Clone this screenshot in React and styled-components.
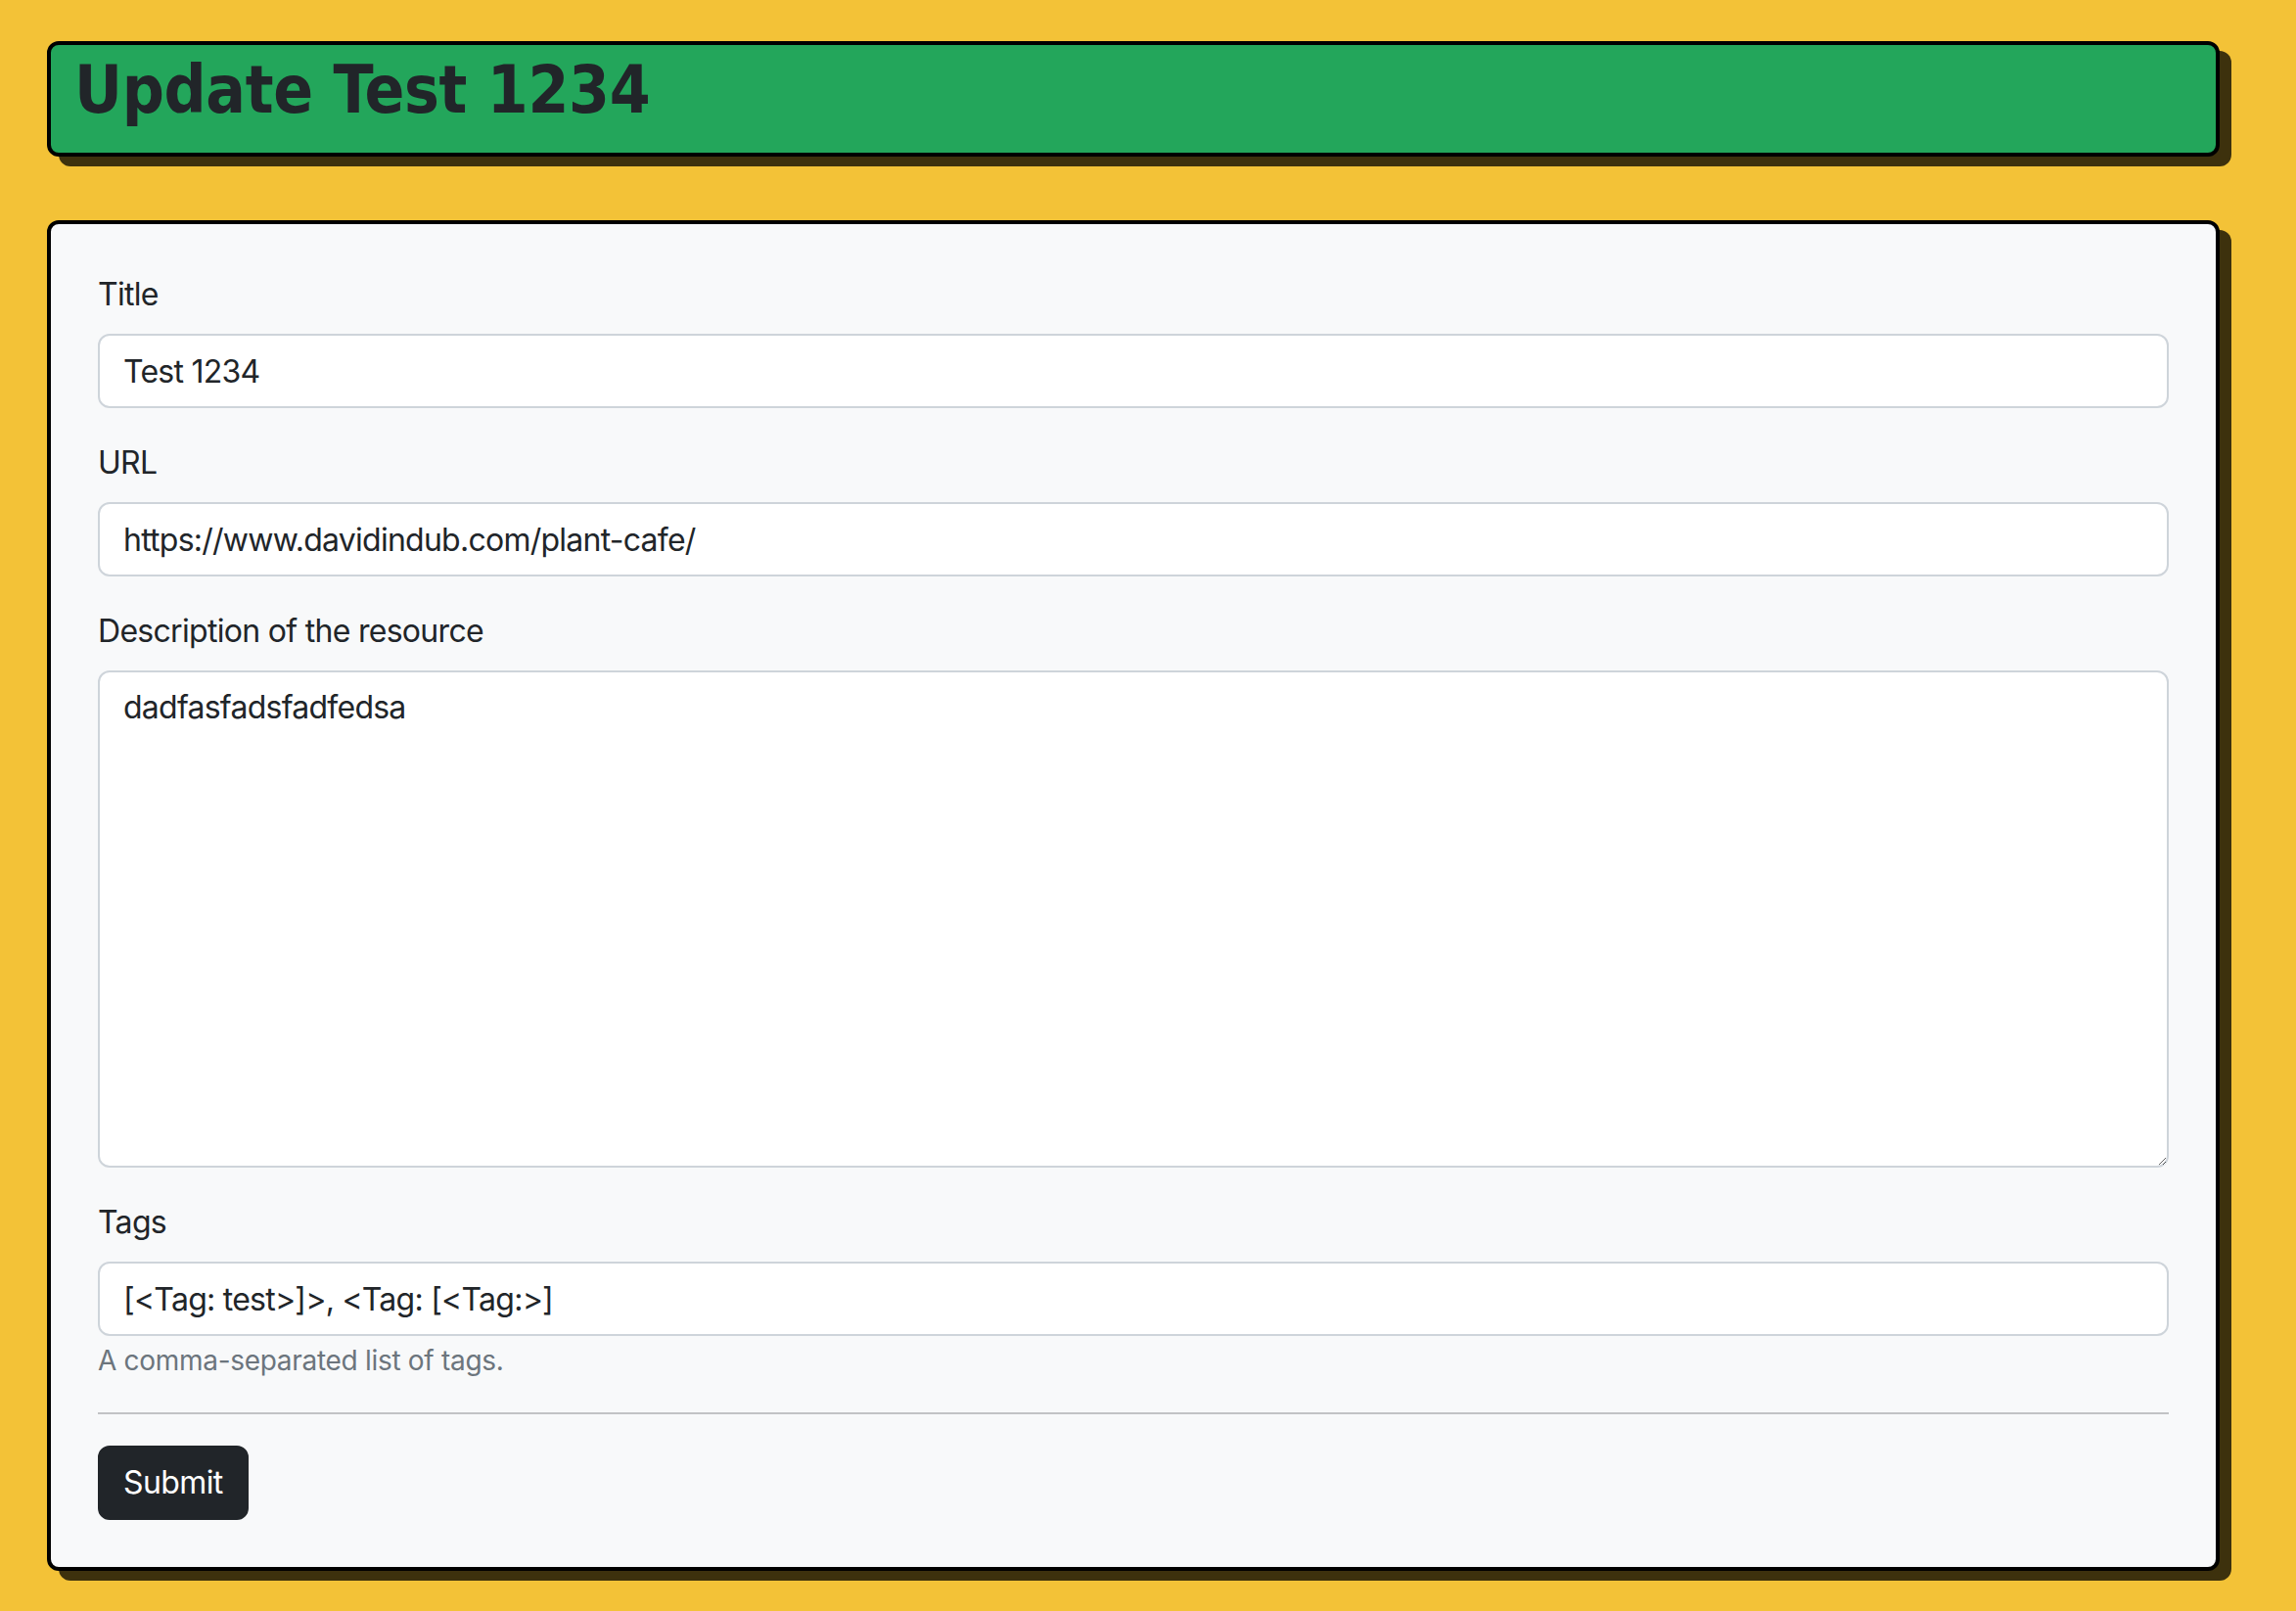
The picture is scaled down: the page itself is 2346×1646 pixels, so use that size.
import React from 'react';
import styled, { createGlobalStyle } from 'styled-components';

const GlobalStyle = createGlobalStyle`
  html, body {
    margin: 0;
    background: #f3c237;
  }
  body {
    font-family: Inter, "Liberation Sans", sans-serif;
    color: #212529;
  }
  * {
    box-sizing: border-box;
  }
`;

const Page = styled.div`
  display: flex;
  flex-direction: column;
  gap: 65px;
  padding: 42px 78px 40px 48px;
`;

const Panel = styled.div`
  background: ${props => props.bg || '#f8f9fa'};
  border: 4px solid #000;
  border-radius: 12px;
  box-shadow: 12px 10px 0 rgba(0, 0, 0, 0.75);
`;

const Heading = styled.h1`
  margin: 0;
  padding: 0 24px 18px;
  font-family: "DejaVu Sans Condensed", "DejaVu Sans", sans-serif;
  font-weight: 700;
  font-size: 67px;
  line-height: 92px;
  color: #212529;
  letter-spacing: -0.3px;
`;

const Form = styled.form`
  display: flex;
  flex-direction: column;
  padding: 48px;
`;

const Field = styled.div`
  display: flex;
  flex-direction: column;
  margin-bottom: ${props => (props.last ? '0' : '32px')};
`;

const Label = styled.label`
  font-size: 32px;
  line-height: 48px;
  letter-spacing: -0.7px;
  margin-bottom: 16px;
`;

const inputStyles = `
  width: 100%;
  font-family: Inter, "Liberation Sans", sans-serif;
  font-size: 32px;
  line-height: 48px;
  letter-spacing: -0.75px;
  color: #212529;
  background: #fff;
  border: 2px solid #ced4da;
  border-radius: 12px;
  padding: 12px 24px;
  outline: none;
`;

const TextInput = styled.input`
  ${inputStyles}
  height: 76px;
`;

const TextArea = styled.textarea`
  ${inputStyles}
  height: 508px;
  resize: vertical;
  display: block;
`;

const HelpText = styled.div`
  margin-top: 4px;
  font-size: 28px;
  line-height: 42px;
  letter-spacing: -0.3px;
  color: #6c757d;
`;

const Divider = styled.hr`
  margin: 32px 0;
  border: 0;
  border-top: 2px solid #212529;
  opacity: 0.25;
`;

const SubmitButton = styled.button`
  align-self: flex-start;
  font-family: Inter, "Liberation Sans", sans-serif;
  font-size: 32px;
  line-height: 48px;
  letter-spacing: -0.6px;
  padding: 12px 24px;
  color: #fff;
  background: #212529;
  border: 2px solid #212529;
  border-radius: 12px;
`;

export default function App() {
  return (
    <>
      <GlobalStyle />
      <Page>
        <Panel bg="#23a65b">
          <Heading>Update Test 1234</Heading>
        </Panel>
        <Panel>
          <Form onSubmit={e => e.preventDefault()}>
            <Field>
              <Label htmlFor="title">Title</Label>
              <TextInput id="title" defaultValue="Test 1234" />
            </Field>
            <Field>
              <Label htmlFor="url">URL</Label>
              <TextInput id="url" defaultValue="https://www.davidindub.com/plant-cafe/" />
            </Field>
            <Field>
              <Label htmlFor="description">Description of the resource</Label>
              <TextArea id="description" defaultValue="dadfasfadsfadfedsa" />
            </Field>
            <Field last>
              <Label htmlFor="tags">Tags</Label>
              <TextInput id="tags" defaultValue="[<Tag: test>]>, <Tag: [<Tag:>]" />
              <HelpText>A comma-separated list of tags.</HelpText>
            </Field>
            <Divider />
            <SubmitButton type="submit">Submit</SubmitButton>
          </Form>
        </Panel>
      </Page>
    </>
  );
}
